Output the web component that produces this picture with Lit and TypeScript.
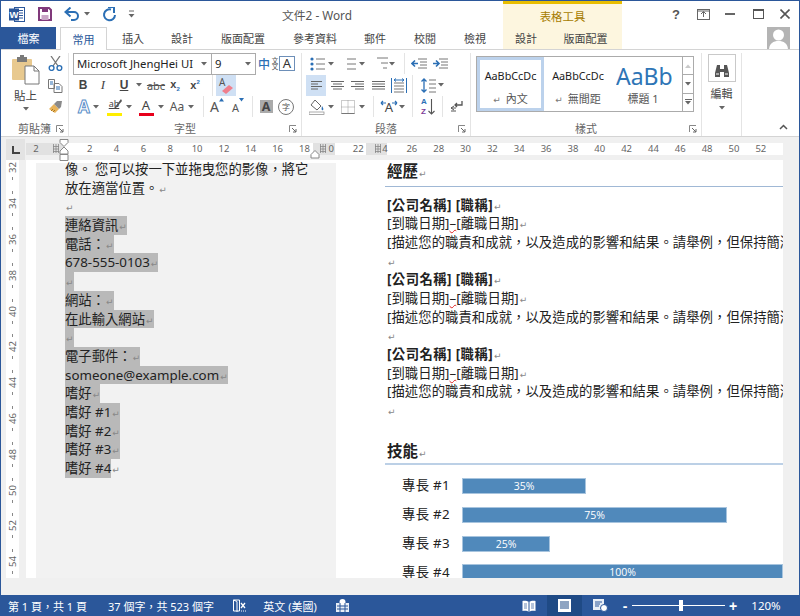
import { LitElement, html, css } from "lit";
import { customElement } from "lit/decorators.js";

type Item = [number, number, unknown, string?];
const row = (start: number, items: Item[]) => {
  let x = start;
  return items.map(([c, w, t, cls]) => {
    const ml = c - w / 2 - x;
    x = c + w / 2;
    return html`<span class="cell ${cls || ""}" style="margin-left:${ml}px;width:${w}px">${t}</span>`;
  });
};

const caret = html`<svg width="6" height="4" viewBox="0 0 6 4"><path d="M0 0h6L3 3.5z" fill="#666"/></svg>`;
const c = (x: number): Item => [x, 8, caret];
const sep = (x: number): Item => [x, 1, "", "sep"];
const launcher = html`<svg class="launch" width="8" height="8" viewBox="0 0 8 8"><path d="M.5 7V.5H7" fill="none" stroke="#888"/><path d="M3 3l4 4M7 4v3H4" fill="none" stroke="#666"/></svg>`;
const mark = html`<span class="m">↵</span>`;

const wordIcon = html`<svg width="16" height="15" viewBox="0 0 16 15"><rect x="5.5" y=".5" width="10" height="14" fill="#fff" stroke="#2b579a"/><path d="M10 3.5h4M10 6h4M10 8.5h4M10 11h4" stroke="#2b579a"/><rect y="1.5" width="10" height="12" fill="#2b579a"/><text x="5" y="11" font-family="Liberation Sans" font-weight="700" font-size="9.5" fill="#fff" text-anchor="middle">W</text></svg>`;
const saveIcon = html`<svg width="14" height="14" viewBox="0 0 14 14"><path d="M1 1h10l2 2v10H1z" fill="#fff" stroke="#80397b" stroke-width="2"/><rect x="4" y="1" width="6" height="4" fill="#80397b"/><rect x="3.5" y="8" width="7" height="5" fill="#c9a6c6"/></svg>`;
const undoIcon = html`<svg width="16" height="14" viewBox="0 0 16 14"><path d="M2 5h8a4 4 0 0 1 0 8H7" fill="none" stroke="#2b6fb5" stroke-width="2"/><path d="M6.500 .5L1.500 5l5 4.500" fill="none" stroke="#2b6fb5" stroke-width="2"/></svg>`;
const redoIcon = html`<svg width="15" height="15" viewBox="0 0 15 15"><path d="M9 2.500A5.500 5.500 0 1 0 13 8" fill="none" stroke="#2b6fb5" stroke-width="2"/><path d="M6 0h6v6" fill="none" stroke="#2b6fb5" stroke-width="2"/></svg>`;
const custIcon = html`<svg width="7" height="8" viewBox="0 0 7 8"><path d="M1 1h5" stroke="#666"/><path d="M.5 4h6L3.500 7.500z" fill="#666"/></svg>`;
const helpIcon = html`<span class="help">?</span>`;
const ribbonOpt = html`<svg width="13" height="11" viewBox="0 0 13 11"><rect x=".5" y=".5" width="12" height="10" fill="none" stroke="#666"/><path d="M6.500 8V3M4 5l2.500-2.500L9 5M1 2h11" fill="none" stroke="#666"/></svg>`;
const minIcon = html`<svg width="10" height="2" viewBox="0 0 10 2"><rect width="10" height="2" fill="#666"/></svg>`;
const maxIcon = html`<svg width="11" height="10" viewBox="0 0 11 10"><rect x=".5" y=".5" width="10" height="9" fill="none" stroke="#555"/><rect width="11" height="2" fill="#555"/></svg>`;
const closeIcon = html`<svg width="10" height="10" viewBox="0 0 10 10"><path d="M.5 .5l9 9M9.500 .5l-9 9" stroke="#555" stroke-width="1.6"/></svg>`;

const pasteIcon = html`<svg width="28" height="30" viewBox="0 0 28 30"><rect x="0" y="4" width="20" height="21" rx="1" fill="#e8c98f"/><rect x="5" y="2" width="10" height="5" fill="#7a7a7a"/><rect x="8" y="0" width="4" height="3" fill="#7a7a7a"/><path d="M13 11h9l5 5v13H13z" fill="#fff" stroke="#777"/><path d="M22 11v5h5" fill="none" stroke="#777"/></svg>`;
const cutIcon = html`<svg width="15" height="15" viewBox="0 0 15 15"><path d="M3 0l7 10M12 0L5 10" stroke="#777" stroke-width="1.3"/><circle cx="3.6" cy="12" r="2.4" fill="none" stroke="#2b6fb5" stroke-width="1.4"/><circle cx="11.4" cy="12" r="2.4" fill="none" stroke="#2b6fb5" stroke-width="1.4"/></svg>`;
const copyIcon = html`<svg width="15" height="14" viewBox="0 0 15 14"><path d="M.5 .5h6v9h-6zM6 4.500h5l3 3v6H6z" fill="#fff" stroke="#777"/><path d="M2 3h3M2 5h3M8 8h4M8 10h4" stroke="#2b6fb5"/></svg>`;
const brushIcon = html`<svg width="15" height="14" viewBox="0 0 15 14"><path d="M1 9l5-5 5 5-4 4z" fill="#e8b35a"/><path d="M6 4l3-3 5 0-1 6-2 2z" fill="#8a8a8a"/><path d="M3 11l2-2M5 12l2-2" stroke="#a97824"/></svg>`;
const zhIcon = html`<span class="zh"><span class="zh1">中</span><span class="zh2">文文</span></span>`;
const clearIcon = html`<span class="clear"><span class="clearA">A</span><svg width="13" height="9" viewBox="0 0 13 9"><path d="M1 6l7-6 4 3-7 6z" fill="#ef7f8d"/></svg></span>`;
const hiIcon = html`<span class="stackA"><span class="hi">ab</span><svg class="pen" width="9" height="11" viewBox="0 0 9 11"><path d="M8 0L2 8l-2 2 3-1 6-7z" fill="#555"/></svg><i class="bar yellow"></i></span>`;
const colorA = html`<span class="stackA"><span class="bigA">A</span><i class="bar red"></i></span>`;
const effectA = html`<span class="fxA">A</span>`;
const growA = html`<span class="grow"><span class="gA">A</span><svg width="5" height="4" viewBox="0 0 5 4"><path d="M0 3.500h5L2.500 0z" fill="#2b6fb5"/></svg></span>`;
const shrinkA = html`<span class="grow"><span class="sA">A</span><svg width="5" height="4" viewBox="0 0 5 4"><path d="M0 0h5L2.500 3.500z" fill="#2b6fb5"/></svg></span>`;
const shadeA = html`<span class="shadeA">A</span>`;
const circleZi = html`<span class="circ">字</span>`;

const L = (ys: number[], x1: number, x2: number) => ys.map((y) => `M${x1} ${y}H${x2}`).join("");
const numText = (x: number, y: number, t: string) => html`<text x="${x}" y="${y}" font-size="5.5" font-family="Liberation Sans" fill="#2b6fb5">${t}</text>`;
const bullets = html`<svg width="15" height="14" viewBox="0 0 15 14"><circle cx="2" cy="2" r="1.6" fill="#2b6fb5"/><circle cx="2" cy="7" r="1.6" fill="#2b6fb5"/><circle cx="2" cy="12" r="1.6" fill="#2b6fb5"/><path d="${L([2, 7, 12], 6, 15)}" stroke="#777"/></svg>`;
const numbered = html`<svg width="15" height="15" viewBox="0 0 15 15">${numText(0, 5, "1")}${numText(0, 10, "2")}${numText(0, 15, "3")}<path d="${L([3, 8, 13], 6, 15)}" stroke="#777"/></svg>`;
const multi = html`<svg width="16" height="15" viewBox="0 0 16 15">${numText(0, 5, "1")}${numText(3, 10, "a")}${numText(6, 15, "i")}<path d="M5 2H16M9 7h7M11 12h4" stroke="#777"/></svg>`;
const outdent = html`<svg width="16" height="11" viewBox="0 0 16 11"><path d="M7 1h9M9 4h7M9 7h7M7 10h9" stroke="#777"/><path d="M7 5.500H1M4 2.500l-3 3 3 3" fill="none" stroke="#2b6fb5" stroke-width="1.6"/></svg>`;
const indent = html`<svg width="16" height="11" viewBox="0 0 16 11"><path d="M7 1h9M9 4h7M9 7h7M7 10h9" stroke="#777"/><path d="M1 5.500h6M4 2.500l3 3-3 3" fill="none" stroke="#2b6fb5" stroke-width="1.6"/></svg>`;
const align = (d: string) => html`<svg width="15" height="11" viewBox="0 0 15 11"><path d="${d}" stroke="#666"/></svg>`;
const distIcon = html`<svg width="16" height="15" viewBox="0 0 16 15"><path d="M.5 0v15M15.500 0v15" stroke="#2b6fb5"/><path d="M3 5h10M3 8h10M3 11h10M3 14h10" stroke="#777"/><path d="M3 2h10M3 2l2-1.500M3 2l2 1.500M13 2l-2-1.500M13 2l-2 1.500" stroke="#2b6fb5" fill="none"/></svg>`;
const spacing = html`<svg width="15" height="15" viewBox="0 0 15 15"><path d="M3 1v13M.5 3.500L3 1l2.500 2.500M.5 11.500L3 14l2.500-2.500" fill="none" stroke="#2b6fb5" stroke-width="1.3"/><path d="${L([2, 6, 10, 14], 8, 15)}" stroke="#777"/></svg>`;
const shadeIcon = html`<svg width="16" height="16" viewBox="0 0 16 16"><path d="M6 1l6 6-4 4-6-5z" fill="#fff" stroke="#666"/><path d="M13 7c1 2 2 3 1 4s-2 0-1-4z" fill="#2b6fb5"/><rect y="13" width="15" height="2.5" fill="#fff" stroke="#888" stroke-width=".7"/></svg>`;
const borderIcon = html`<svg width="14" height="14" viewBox="0 0 14 14"><path d="M.5 .5h13v13H.5zM7 .5v13M.5 7h13" fill="none" stroke="#999" stroke-dasharray="1 1"/><path d="M.5 13.500h13" stroke="#777"/></svg>`;
const dirIcon = html`<span class="dirA"><svg width="18" height="6" viewBox="0 0 18 6"><path d="M1 3h5M1 3l2-2M1 3l2 2M17 3h-5M17 3l-2-2M17 3l-2 2" fill="none" stroke="#2b6fb5" stroke-width="1.2"/></svg><span>A</span></span>`;
const sortIcon = html`<span class="sort"><span class="az"><b class="a1">A</b><b class="z1">Z</b></span><svg width="7" height="16" viewBox="0 0 7 16"><path d="M3.500 0v15M.5 12l3 3 3-3" fill="none" stroke="#555" stroke-width="1.1"/></svg></span>`;
const pilcrow = html`<svg width="13" height="13" viewBox="0 0 13 13"><path d="M12 1v4H5M7 3L5 5l2 2" fill="none" stroke="#555" stroke-width="1.3"/><path d="M1 8h5M1 11h5M4 6l-3 2 3 2" fill="none" stroke="#555"/></svg>`;
const binoc = html`<svg width="16" height="14" viewBox="0 0 16 14"><path d="M3 1h3v4h4V1h3l2 8v4H10V8H6v5H1V9z" fill="#555"/><path d="M2 10h3M11 10h3" stroke="#fff"/></svg>`;
const person = html`<svg width="23" height="23" viewBox="0 0 23 23"><rect width="23" height="23" fill="#b4b4b4"/><circle cx="11.5" cy="8" r="5.5" fill="#fff"/><path d="M2 23c0-6 4-9 9.500-9s9.500 3 9.500 9z" fill="#fff"/></svg>`;
const collapse = html`<svg width="9" height="6" viewBox="0 0 9 6"><path d="M1 5l3.500-3.500L8 5" fill="none" stroke="#555" stroke-width="1.5"/></svg>`;
const gridMark = html`<svg width="6" height="9" viewBox="0 0 6 9"><path d="M.5 0v9M3 0v9M5.500 0v9M0 2.500h6M0 5h6M0 7.500h6" stroke="#888" stroke-width=".8"/></svg>`;

const sb = {
  book: html`<svg width="14" height="12" viewBox="0 0 14 12"><path d="M7 2C5 .5 2 .5 .5 1v10c2-.5 5-.5 6.500 1 1.500-1.500 4.500-1.500 6.500-1V1C12 .5 9 .5 7 2z" fill="#fff"/><path d="M7 2v10" stroke="#2b579a"/><path d="M2 4h3M2 6h3M2 8h3M9 4h3M9 6h3M9 8h3" stroke="#2b579a" stroke-width=".7"/></svg>`,
  print: html`<svg width="13" height="13" viewBox="0 0 13 13"><rect width="13" height="13" fill="#fff"/><path d="M2 3h9M2 5h9M2 7h9M2 9h9" stroke="#1f4a85"/></svg>`,
  web: html`<svg width="15" height="13" viewBox="0 0 15 13"><rect width="11" height="11" fill="#e8eef6"/><path d="M2 3h7M2 5h5M2 7h4" stroke="#2b579a"/><circle cx="11" cy="9" r="3.5" fill="#fff" stroke="#2b579a"/></svg>`,
  spell: html`<svg width="15" height="13" viewBox="0 0 15 13"><path d="M.5 1h6v11h-6zM.5 1L4 2.500v11" fill="none" stroke="#fff"/><path d="M8 4l4 5M12 4L8 9" stroke="#fff" stroke-width="1.3"/><path d="M8 12h6" stroke="#fff" stroke-dasharray="1 1"/></svg>`,
  macro: html`<svg width="13" height="13" viewBox="0 0 13 13"><rect y="4" width="13" height="9" fill="#e8eef6"/><circle cx="6.500" cy="3" r="3" fill="#fff"/><path d="M1 7h11M1 10h11M4 4v9M9 4v9" stroke="#2b579a"/></svg>`,
};

const rulerNums = ["2", "", "2", "4", "6", "8", "10", "12", "14", "16", "18", "0", "22", "4", "26", "28", "30", "32", "34", "36", "38", "40", "42", "44", "46", "48", "50", "52"];
const vNums = ["32", "34", "36", "38", "40", "42", "44", "46", "48", "50", "52", "54"];
const skills: [string, number, string][] = [["專長 #1", 124, "35%"], ["專長 #2", 265, "75%"], ["專長 #3", 88, "25%"], ["專長 #4", 321, "100%"]];
const leftSel = ["連絡資訊", "電話：", "678-555-0103", "", "網站：", "在此輸入網站", "", "電子郵件：", "someone@example.com", "嗜好", "嗜好 #1", "嗜好 #2", "嗜好 #3"];
const desc = "[描述您的職責和成就，以及造成的影響和結果。請舉例，但保持簡潔，並著重於重點。";

@customElement("app-root")
export class AppRoot extends LitElement {
  static styles = css`
    :host { display: flex; flex-direction: column; width: 800px; height: 616px; box-sizing: border-box; border: 1px solid #2b579a; border-bottom: 0; background: #fff; overflow: hidden; font-family: "Noto Sans", "Noto Sans CJK TC", sans-serif; color: #444; font-size: 11px; }
    .cell { display: inline-flex; align-items: center; justify-content: center; flex: none; height: 100%; white-space: nowrap; }
    .row { display: flex; align-items: center; }
    .title { height: 26px; }
    .titleText { color: #555; font-size: 11.8px; }
    .ctxHead { background: #fdf6df; border-top: 3px solid #e8bd00; box-sizing: border-box; color: #a67c00; font-size: 11.4px; }
    .help { font: 700 13px "Liberation Sans", sans-serif; color: #555; }
    .tabs { height: 23px; border-bottom: 1px solid #d4d4d4; box-sizing: border-box; align-items: stretch; }
    .file { background: #2b579a; color: #fff; }
    .active { background: #fff; color: #2b579a; border: 1px solid #d4d4d4; border-bottom: 0; box-sizing: border-box; height: 23px; margin-bottom: -1px; z-index: 1; }
    .ctx { background: #fdf6df; }
    .avatar { align-self: flex-start; height: 22px; overflow: hidden; }
    .ribbon { height: 87px; display: flex; padding-top: 3px; box-sizing: border-box; border-bottom: 1px solid #d4d4d4; }
    .group { height: 83px; flex: none; display: flex; flex-direction: column; border-right: 1px solid #e4e4e4; box-sizing: border-box; }
    .gbody { height: 65px; margin-bottom: 4px; flex: none; }
    .gbody .row { height: 21.6px; }
    .glabel { display: grid; grid-template-columns: 1fr auto 1fr; height: 14px; align-items: center; color: #666; line-height: 14px; }
    .glabel span { grid-column: 2; }
    .launch { grid-column: 3; justify-self: end; margin-right: 4px; }
    .clip { display: flex; padding-left: 3px; }
    .paste { width: 43px; display: flex; flex-direction: column; align-items: center; color: #444; font-size: 11.5px; padding-top: 2px; line-height: 15px; }
    .paste svg:first-child { margin-bottom: 3px; }
    .paste svg:last-child { margin-top: 4px; }
    .small { width: 16px; display: flex; flex-direction: column; align-items: center; gap: 7.5px; padding-top: 3px; }
    .combo { height: 22px; border: 1px solid #ababab; box-sizing: border-box; justify-content: space-between; padding: 0 4px 0 3px; color: #222; font-size: 11.3px; }
    .combo + .combo { border-left: 0; }
    .boxA { border: 1px solid #6d8fb8; width: 16px; height: 15px; box-sizing: border-box; display: flex; align-items: center; justify-content: center; font: 13px/13px "Noto Sans", sans-serif; color: #333; }
    .zh { display: inline-flex; align-items: center; gap: 1px; color: #555; }
    .zh1 { font: 500 12px/16px "Noto Sans CJK TC", sans-serif; color: #2b6fb5; }
    .zh2 { writing-mode: vertical-rl; font: 6.5px/7px "Noto Sans CJK TC", sans-serif; }
    .clear { display: inline-flex; flex-direction: column; position: relative; width: 16px; height: 17px; }
    .clearA { font: 10px/11px "Noto Sans", sans-serif; color: #555; margin-left: 1px; }
    .clear svg { margin: -3px 0 0 3px; }
    .on { background: #cfe0f4; }
    .sep { background: #e4e4e4; height: 21px; }
    .tB { font: 700 12px "Liberation Sans", sans-serif; color: #444; }
    .tI { font: italic 13px "Liberation Serif", serif; color: #444; }
    .tU { font: 700 12px "Liberation Sans", sans-serif; color: #444; text-decoration: underline; }
    .tS { font-size: 11px; color: #555; text-decoration: line-through; }
    .tX { font: 700 11px "Liberation Sans", sans-serif; color: #444; }
    .tX sub, .tX sup { font-size: 6px; color: #2b6fb5; }
    .tAa { font-size: 12px; color: #555; }
    .stackA { display: inline-flex; flex-direction: column; align-items: center; position: relative; width: 15px; height: 18px; }
    .hi { font-size: 9px; line-height: 12px; color: #444; text-decoration: underline; }
    .pen { position: absolute; right: 0; top: 1px; }
    .bigA { font-size: 13px; line-height: 15px; color: #444; }
    .bar { position: absolute; bottom: 0; left: 0; width: 15px; height: 3px; }
    .yellow { background: #ffee00; }
    .red { background: #e8001b; }
    .fxA { font: 700 17px "Noto Sans", sans-serif; color: #fff; -webkit-text-stroke: 1px #5b8fc9; }
    .grow { display: inline-flex; align-items: flex-start; }
    .gA { font-size: 14px; line-height: 17px; color: #555; }
    .sA { font-size: 11px; line-height: 17px; margin-top: 1px; color: #555; }
    .shadeA { background: #aaa; color: #444; font: 700 12.5px/13px "Noto Sans", sans-serif; width: 13px; height: 13px; display: flex; align-items: center; justify-content: center; }
    .circ { border: 1px solid #777; border-radius: 50%; width: 14px; height: 14px; display: flex; align-items: center; justify-content: center; font-size: 8px; color: #555; }
    .dirA { display: inline-flex; flex-direction: column; align-items: center; line-height: 11px; font-size: 13px; color: #444; }
    .dirA svg { margin-bottom: -4px; }
    .sort { display: inline-flex; align-items: center; gap: 1px; }
    .az { display: flex; flex-direction: column; font: 700 8px/9.5px "Liberation Sans", sans-serif; }
    .a1 { color: #2b6fb5; }
    .z1 { color: #7d3c98; }
    .gallery { margin: 3px 0 0 5px; width: 218px; height: 56px; border: 1px solid #ababab; box-sizing: border-box; display: flex; }
    .sty { height: 54px; flex: none; display: flex; flex-direction: column; align-items: center; box-sizing: border-box; overflow: hidden; color: #555; }
    .s1 { width: 67px; border: 3px solid #bcd2ec; }
    .s2 { width: 68px; padding: 3px 0; }
    .s3 { width: 62px; padding: 5px 0 0; }
    .sample { font: 10.8px/31px "Noto Sans", sans-serif; color: #1c1c1c; height: 30px; }
    .h1 { font: 23px/28px "Noto Sans", sans-serif; color: #2e75b6; height: 28px; width: 56px; margin-left: 2px; overflow: hidden; white-space: nowrap; }
    .styName { font-size: 11px; line-height: 18px; white-space: nowrap; }
    .styName .m { font-size: 9px; margin: 0 2px 0 0; color: #777; }
    .scroll { margin-left: 8px; width: 13px; border-left: 1px solid #ababab; display: flex; flex-direction: column; }
    .scroll span { flex: 1; display: flex; align-items: center; justify-content: center; border-bottom: 1px solid #ababab; flex-direction: column; gap: 1px; }
    .scroll span:last-child { border: 0; }
    .scroll .dim { opacity: .35; transform: scaleY(-1); border: 0; flex: none; }
    .dash { width: 7px; height: 1px; background: #666; }
    .edit { display: flex; flex-direction: column; align-items: center; color: #444; font-size: 11px; line-height: 14px; }
    .editBox { width: 28px; height: 28px; margin-top: 1px; border: 1px solid #c9c9c9; box-sizing: border-box; display: flex; align-items: center; justify-content: center; margin-bottom: 5px; }
    .edit svg:last-child { margin-top: 5px; }
    .gfill { flex: 1; display: flex; justify-content: flex-end; align-items: flex-end; padding: 0 11px 6px 0; height: 83px; box-sizing: border-box; }
    .rulerRow { height: 23px; flex: none; display: flex; background: #f0f0f0; padding-top: 2px; box-sizing: border-box; position: relative; }
    .corner { margin-left: 5px; width: 19px; height: 21px; margin-right: 1px; background: #e3e3e3; display: flex; align-items: center; justify-content: center; }
    .strip { width: 757px; height: 12px; margin-top: 4px; display: grid; overflow: hidden; color: #666; font: 9.5px/12px "Noto Sans", sans-serif; }
    .strip > div { grid-area: 1 / 1; display: flex; }
    .strip > .nums { margin-left: -3.4px; }
    .g { background: #e1e1e1; height: 100%; flex: none; }
    .w { background: #fff; height: 100%; flex: none; }
    .gw38 { width: 38px; } .ww249 { width: 249px; } .gw22 { width: 22px; } .ww31 { width: 31px; } .gw21 { width: 21px; } .wfill { flex: 1; }
    .num { width: 26.85px; flex: none; text-align: center; }
    .rm { position: absolute; top: 7px; line-height: 0; }
    .rm1 { left: 52px; } .rm2 { left: 319px; } .rm3 { left: 374px; }
    .ind { position: absolute; }
    .ind1 { left: 58px; top: 2px; } .ind2 { left: 309px; top: 13px; }
    .main { flex: 1; display: flex; background: #f0f0f0; min-height: 0; }
    .vr { margin: 0 7px 17px 5px; width: 13px; flex: none; background: #fff; overflow: hidden; color: #666; font: 9.5px "Noto Sans", sans-serif; }
    .vc { height: 35.8px; display: flex; flex-direction: column; align-items: center; justify-content: center; gap: 4px; }
    .vc:first-child { margin-top: -10px; }
    .vc::before, .vc::after { content: ""; width: 1px; height: 3px; background: #888; flex: none; }
    .vn { writing-mode: vertical-rl; transform: rotate(180deg); line-height: 11px; }
    .page { width: 757px; margin-bottom: 17px; flex: none; background: #fff; overflow: hidden; display: flex; color: #222; font: 13.33px/18.7px "Noto Sans", "Noto Sans CJK TC", sans-serif; }
    .lcol { margin: 3px 0 0 10px; width: 300px; flex: none; background: #f2f2f2; padding-left: 29px; box-sizing: border-box; }
    .lines { margin-top: -3px; }
    .ln { height: 18.7px; white-space: nowrap; }
    .sel { background: #b9b9b9; display: inline-block; height: 18.7px; }
    .m { font: 9px "DejaVu Sans", sans-serif; color: #888; margin-left: 1px; }
    .rcol { margin-left: 49px; width: 398px; flex: none; overflow: hidden; }
    .hd { font-weight: 700; font-size: 15.5px; height: 26px; line-height: 22px; padding-left: 2px; border-bottom: 1px solid #a0b8d5; }
    .hd2 { margin-top: 19px; height: 26px; line-height: 24px; border-bottom: 2px solid #bcd0e6; box-sizing: border-box; }
    .exp { margin-top: 8.5px; padding-left: 2px; letter-spacing: .07px; }
    .bold { font-weight: 700; letter-spacing: .45px; }
    .bold .m { letter-spacing: 0; }
    .wavy { text-decoration: underline wavy #d22; text-decoration-thickness: 1px; }
    .skills { margin-top: 13px; display: flex; flex-direction: column; gap: 12.9px; }
    .sk { display: flex; height: 16px; align-items: center; }
    .skl { margin-left: 17px; width: 60px; flex: none; letter-spacing: .3px; }
    .skb { height: 16px; background: #5089bb; border: 1px solid #a7c4de; box-sizing: border-box; color: #fff; font: 10.5px/14px "Open Sans", sans-serif; text-align: center; flex: none; }
    .status { height: 21px; flex: none; background: #2b579a; color: #fff; display: flex; align-items: center; font-size: 11px; }
    .pr { background: #1f4a85; }
    .slider { height: 1px; background: #fff; position: relative; }
    .knob { position: absolute; left: 47px; top: -5px; width: 4px; height: 11px; background: #fff; }
    .plus { font: 700 14px "Liberation Sans", sans-serif; }
    .zoom { font-size: 11.5px; }
  `;

  render() {
    return html`
      <div class="row title">
        ${row(1, [
          [17, 16, wordIcon], [45, 14, saveIcon], [72, 16, undoIcon], [87, 8, caret], [109, 15, redoIcon], [131, 8, custIcon],
          [317, 120, html`<span class="titleText">文件2 - Word</span>`],
          [562.5, 119, "表格工具", "ctxHead"],
          [676, 14, helpIcon], [703, 14, ribbonOpt], [730, 12, minIcon], [758, 12, maxIcon], [785, 12, closeIcon],
        ])}
      </div>
      <div class="row tabs">
        ${row(1, [
          [28.5, 55, "檔案", "file"], [83.5, 47, "常用", "active"], [133, 40, "插入"], [182, 40, "設計"], [243, 60, "版面配置"],
          [315, 60, "參考資料"], [375, 40, "郵件"], [425, 40, "校閱"], [475, 40, "檢視"],
          [503 + 23, 46, "設計", "ctx"], [549 + 36.5, 73, "版面配置", "ctx"],
          [778.5, 23, person, "avatar"],
        ])}
      </div>
      <div class="ribbon">
        <div class="group" style="width:68px">
          <div class="gbody clip">
            <div class="paste">${pasteIcon}<span>貼上</span>${caret}</div>
            <div class="small">${cutIcon}${copyIcon}${brushIcon}</div>
          </div>
          <div class="glabel"><span>剪貼簿</span>${launcher}</div>
        </div>
        <div class="group" style="width:233px">
          <div class="gbody">
            <div class="row">
              ${row(69, [
                [142.5, 139, html`<span>Microsoft JhengHei UI</span>${caret}`, "combo"],
                [234, 44, html`<span>9</span>${caret}`, "combo"],
                [268, 20, zhIcon], [287, 16, html`<span class="boxA">A</span>`],
              ])}
            </div>
            <div class="row">
              ${row(69, [
                [83, 16, html`<span class="tB">B</span>`], [103, 16, html`<span class="tI">I</span>`], [124, 16, html`<span class="tU">U</span>`], c(139),
                [156, 22, html`<span class="tS">abc</span>`],
                [175, 16, html`<span class="tX">x<sub>2</sub></span>`], [195, 16, html`<span class="tX">x<sup>2</sup></span>`],
                sep(212), [226, 20, clearIcon, "on"],
              ])}
            </div>
            <div class="row">
              ${row(69, [
                [84, 16, effectA], c(96), [114, 16, hiIcon], c(129), [146, 16, colorA], c(161),
                [177, 18, html`<span class="tAa">Aa</span>`], c(191), sep(203),
                [217, 16, growA], [238, 16, shrinkA], sep(252), [266, 14, shadeA], [286, 16, circleZi],
              ])}
            </div>
          </div>
          <div class="glabel"><span>字型</span>${launcher}</div>
        </div>
        <div class="group" style="width:169px">
          <div class="gbody">
            <div class="row">
              ${row(302, [
                [317.5, 15, bullets], c(331), [348, 15, numbered], c(362), [380, 16, multi], c(392),
                sep(404), [418.5, 16, outdent], [439.5, 16, indent],
              ])}
            </div>
            <div class="row">
              ${row(302, [
                [316, 20, align("M2 1.500h11M2 4h7M2 6.500h11M2 9h7"), "on"],
                [337, 15, align("M1 1.500h13M3 4h9M1 6.500h13M3 9h9")],
                [357, 15, align("M1 1.500h13M5 4h9M1 6.500h13M5 9h9")],
                [378, 15, align("M1 1.500h13M1 4h13M1 6.500h13M1 9h13")],
                [398.5, 16, distIcon], sep(412), [428, 15, spacing], c(441),
              ])}
            </div>
            <div class="row">
              ${row(302, [
                [317, 16, shadeIcon], c(331), [348, 14, borderIcon], c(362), sep(373),
                [389, 18, dirIcon], c(402), sep(412), [428, 16, sortIcon], sep(442), [456, 13, pilcrow],
              ])}
            </div>
          </div>
          <div class="glabel"><span>段落</span>${launcher}</div>
        </div>
        <div class="group" style="width:231px">
          <div class="gbody">
            <div class="gallery">
              <div class="sty s1"><span class="sample">AaBbCcDc</span><span class="styName"><span class="m">↵</span> 內文</span></div>
              <div class="sty s2"><span class="sample">AaBbCcDc</span><span class="styName"><span class="m">↵</span> 無間距</span></div>
              <div class="sty s3"><span class="h1">AaBbCc</span><span class="styName">標題 1</span></div>
              <div class="scroll"><span><span class="dim">${caret}</span></span><span>${caret}</span><span><i class="dash"></i>${caret}</span></div>
            </div>
          </div>
          <div class="glabel"><span>樣式</span>${launcher}</div>
        </div>
        <div class="group" style="width:40px">
          <div class="edit">
            <span class="editBox">${binoc}</span>
            <span>編輯</span>
            ${caret}
          </div>
        </div>
        <div class="gfill">${collapse}</div>
      </div>
      <div class="rulerRow">
        <div class="corner"><svg width="8" height="8" viewBox="0 0 8 8"><path d="M1 0v7h7" fill="none" stroke="#444" stroke-width="2"/></svg></div>
        <div class="strip">
          <div>
            <span class="g gw38"></span><span class="w ww249"></span><span class="g gw22"></span><span class="w ww31"></span><span class="g gw21"></span><span class="w wfill"></span>
          </div>
          <div class="nums">${rulerNums.map((n) => html`<span class="num">${n}</span>`)}</div>
        </div>
        <span class="rm rm1">${gridMark}</span>
        <span class="rm rm2">${gridMark}</span>
        <span class="rm rm3">${gridMark}</span>
        <svg class="ind ind1" width="11" height="22" viewBox="0 0 11 22"><path d="M1 .5h8v3L5 7.500 1 3.500zM5 8l4 4v3H1v-3z" fill="#fff" stroke="#888"/><path d="M1 15.500h8v6H1z" fill="#fff" stroke="#888"/></svg>
        <svg class="ind ind2" width="11" height="9" viewBox="0 0 11 9"><path d="M5 .5l4 4v3.500H1V4.500z" fill="#fff" stroke="#888"/></svg>
      </div>
      <div class="main">
        <div class="vr">
          ${vNums.map((n) => html`<div class="vc"><span class="vn">${n}</span></div>`)}
        </div>
        <div class="page">
          <div class="lcol">
            <div class="lines">
              <div class="ln">像。 您可以按一下並拖曳您的影像，將它</div>
              <div class="ln">放在適當位置。${mark}</div>
              <div class="ln">${mark}</div>
              ${leftSel.map((t) => html`<div class="ln"><span class="sel">${t}${mark}</span></div>`)}
              <div class="ln"><span class="sel">嗜好 #4</span>${mark}</div>
            </div>
          </div>
          <div class="rcol">
            <div class="hd">經歷${mark}</div>
            <div class="exp">
              ${[0, 1, 2].map(() => html`
                <div class="ln bold">[公司名稱] [職稱]${mark}</div>
                <div class="ln">[到職日期]<span class="wavy">–</span>[離職日期]${mark}</div>
                <div class="ln">${desc}</div>
                <div class="ln">${mark}</div>
              `)}
            </div>
            <div class="hd hd2">技能${mark}</div>
            <div class="skills">
              ${skills.map(([l, w, p]) => html`<div class="sk"><span class="skl">${l}</span><span class="skb" style="width:${w}px">${p}</span></div>`)}
            </div>
          </div>
        </div>
      </div>
      <div class="status">
        ${row(1, [
          [47.5, 80, "第 1 頁，共 1 頁"], [161, 110, "37 個字，共 523 個字"], [240, 15, sb.spell], [290, 56, "英文 (美國)"], [342, 13, sb.macro],
          [528.5, 14, sb.book], [564.5, 35, sb.print, "pr"], [600, 15, sb.web],
          [625, 6, html`<span class="plus">-</span>`],
          [678.5, 93, html`<span class="slider" style="width:93px"><i class="knob"></i></span>`],
          [733, 10, html`<span class="plus">+</span>`], [766, 32, html`<span class="zoom">120%</span>`],
        ])}
      </div>
    `;
  }
}
